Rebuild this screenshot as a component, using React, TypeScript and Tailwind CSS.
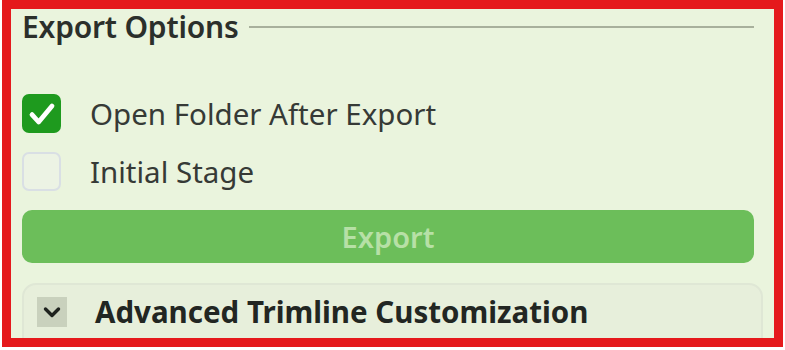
import React, { useState } from "react";

const font = { fontFamily: '"Noto Sans", "Open Sans", sans-serif' };

function Check({ checked, onClick }: { checked: boolean; onClick: () => void }) {
  return (
    <button
      onClick={onClick}
      className={`flex h-[39px] w-[39px] shrink-0 items-center justify-center rounded-[7px] ${
        checked ? "bg-[#1e9a1e]" : "border-2 border-[#d9dfe4] bg-[#ecf3e4]"
      }`}
    >
      {checked && (
        <svg viewBox="0 0 24 24" className="h-[32px] w-[32px]" fill="none" stroke="white" strokeWidth={3.6} strokeLinecap="round" strokeLinejoin="round">
          <path d="M4.5 12.5l5 5.5L19.5 6" />
        </svg>
      )}
    </button>
  );
}

export default function App() {
  const [openFolder, setOpenFolder] = useState(true);
  const [initial, setInitial] = useState(false);

  return (
    <div className="h-[350px] w-[785px] bg-white" style={font}>
      <div className="ml-[2px] h-[347px] w-[781px] overflow-hidden border-[9px] border-[#e5191c] bg-[#eaf4dd]">
        <div className="flex flex-col pl-[11px] pr-[20px]">
          <div className="flex h-[35px] items-center gap-[10px]">
            <span className="text-[30px] font-semibold leading-none tracking-[-0.2px] text-[#2b2f2b]">Export Options</span>
            <div className="h-[2px] flex-1 bg-[#a8b09c]" />
          </div>

          <div className="mt-[50px] flex items-center gap-[29px]">
            <Check checked={openFolder} onClick={() => setOpenFolder(!openFolder)} />
            <span className="text-[29.5px] leading-none text-[#363a36]">Open Folder After Export</span>
          </div>
          <div className="mt-[19px] flex items-center gap-[29px]">
            <Check checked={initial} onClick={() => setInitial(!initial)} />
            <span className="text-[29.5px] leading-none text-[#363a36]">Initial Stage</span>
          </div>

          <button className="mt-[19px] flex h-[53px] items-center justify-center rounded-[10px] bg-[#6cbe5a] text-[29px] font-semibold text-[#b7e0a6]">
            Export
          </button>

          <div className="-mr-[9px] mt-[20px] flex h-[70px] items-start gap-[28px] rounded-[14px] border-2 border-[#dfe7d5] bg-[#e7efdb] pl-[13px] pt-[12px]">
            <div className="flex h-[30px] w-[30px] items-center justify-center bg-[#c9d1bd]">
              <svg viewBox="0 0 24 24" className="h-[24px] w-[24px]" fill="none" stroke="#1e221e" strokeWidth={3.4} strokeLinecap="round" strokeLinejoin="round">
                <path d="M5.5 9l6.5 6.5L18.5 9" />
              </svg>
            </div>
            <span className="text-[29.5px] font-bold leading-[30px] text-[#222622]">Advanced Trimline Customization</span>
          </div>
        </div>
      </div>
    </div>
  );
}
